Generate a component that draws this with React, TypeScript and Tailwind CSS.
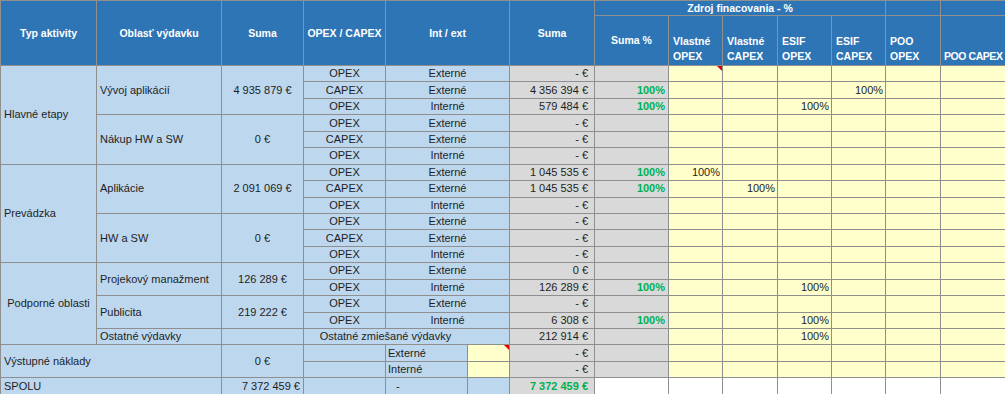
import React from "react";

const bd = "border border-[#8f8f8f]";
const hd = `${bd} bg-[#2e75b6] text-white font-bold text-[10.5px]`;
const blue = `${bd} bg-[#bdd7ee]`;
const grey = `${bd} bg-[#d9d9d9]`;
const yellow = `${bd} bg-[#ffffcc]`;
const white = `${bd} bg-white`;

function Tri() {
  return (
    <span className="absolute right-0 top-0 w-0 h-0 border-t-[5px] border-l-[5px] border-t-[#e00000] border-l-transparent" />
  );
}

function Tail({ s, pct, at, tri }: { s: string; pct?: boolean; at?: number; tri?: boolean }) {
  return (
    <>
      <td className={`${grey} text-right pr-[6px]`}>{s}</td>
      <td className={`${grey} text-right pr-[3px] font-bold text-[#00b050]`}>{pct ? "100%" : ""}</td>
      {[0, 1, 2, 3, 4, 5].map((i) => (
        <td key={i} className={`${yellow} text-right pr-[2px] ${i === 0 && tri ? "relative" : ""}`}>
          {at === i ? "100%" : ""}
          {i === 0 && tri ? <Tri /> : null}
        </td>
      ))}
    </>
  );
}

function OC({ t }: { t: string }) {
  return <td className={`${blue} text-center`}>{t}</td>;
}
function IE({ t }: { t: string }) {
  return (
    <td colSpan={2} className={`${blue} text-center`}>
      {t}
    </td>
  );
}

const rowH = "h-[16.45px]";

export default function App() {
  return (
    <div className="w-[1005px] h-[394px] overflow-hidden bg-white font-['Liberation_Sans',Arial,sans-serif] text-[11px] text-[#1e1e1e] leading-[13px]">
      <table className="table-fixed border-collapse w-[1020px]">
        <colgroup>
          <col className="w-[96px]" />
          <col className="w-[125px]" />
          <col className="w-[82px]" />
          <col className="w-[82px]" />
          <col className="w-[82px]" />
          <col className="w-[42px]" />
          <col className="w-[85px]" />
          <col className="w-[74px]" />
          <col className="w-[54px]" />
          <col className="w-[55px]" />
          <col className="w-[54px]" />
          <col className="w-[54px]" />
          <col className="w-[55px]" />
          <col className="w-[80px]" />
        </colgroup>
        <tbody>
          <tr className="h-[15px]">
            <td rowSpan={2} className={`${hd} text-center`}>Typ aktivity</td>
            <td rowSpan={2} className={`${hd} text-center`}>Oblasť výdavku</td>
            <td rowSpan={2} className={`${hd} text-center`}>Suma</td>
            <td rowSpan={2} className={`${hd} text-center`}>OPEX / CAPEX</td>
            <td rowSpan={2} colSpan={2} className={`${hd} text-center`}>Int / ext</td>
            <td rowSpan={2} className={`${hd} text-center`}>Suma</td>
            <td colSpan={5} className={`${hd} text-center leading-[14px]`}>Zdroj finacovania - %</td>
            <td className={hd}></td>
            <td className={hd}></td>
          </tr>
          <tr className="h-[50px]">
            <td className={`${hd} text-center`}>Suma %</td>
            <td className={`${hd} align-bottom leading-[15px] pl-[4px] pb-[1px]`}>Vlastné<br />OPEX</td>
            <td className={`${hd} align-bottom leading-[15px] pl-[4px] pb-[1px]`}>Vlastné<br />CAPEX</td>
            <td className={`${hd} align-bottom leading-[15px] pl-[4px] pb-[1px]`}>ESIF<br />OPEX</td>
            <td className={`${hd} align-bottom leading-[15px] pl-[4px] pb-[1px]`}>ESIF<br />CAPEX</td>
            <td className={`${hd} align-bottom leading-[15px] pl-[4px] pb-[1px]`}>POO<br />OPEX</td>
            <td className={`${hd} align-bottom leading-[15px] pl-[3px] pb-[1px] whitespace-nowrap tracking-[-0.45px]`}>POO CAPEX</td>
          </tr>

          {/* Hlavné etapy */}
          <tr className={rowH}>
            <td rowSpan={6} className={`${blue} pl-[3px]`}>Hlavné etapy</td>
            <td rowSpan={3} className={`${blue} pl-[3px]`}>Vývoj aplikácií</td>
            <td rowSpan={3} className={`${blue} text-center`}>4 935 879 €</td>
            <OC t="OPEX" />
            <IE t="Externé" />
            <Tail s="- €" tri />
          </tr>
          <tr className={rowH}>
            <OC t="CAPEX" />
            <IE t="Externé" />
            <Tail s="4 356 394 €" pct at={3} />
          </tr>
          <tr className={rowH}>
            <OC t="OPEX" />
            <IE t="Interné" />
            <Tail s="579 484 €" pct at={2} />
          </tr>
          <tr className={rowH}>
            <td rowSpan={3} className={`${blue} pl-[3px]`}>Nákup HW a SW</td>
            <td rowSpan={3} className={`${blue} text-center`}>0 €</td>
            <OC t="OPEX" />
            <IE t="Externé" />
            <Tail s="- €" />
          </tr>
          <tr className={rowH}>
            <OC t="CAPEX" />
            <IE t="Externé" />
            <Tail s="- €" />
          </tr>
          <tr className={rowH}>
            <OC t="OPEX" />
            <IE t="Interné" />
            <Tail s="- €" />
          </tr>

          {/* Prevádzka */}
          <tr className={rowH}>
            <td rowSpan={6} className={`${blue} pl-[3px]`}>Prevádzka</td>
            <td rowSpan={3} className={`${blue} pl-[3px]`}>Aplikácie</td>
            <td rowSpan={3} className={`${blue} text-center`}>2 091 069 €</td>
            <OC t="OPEX" />
            <IE t="Externé" />
            <Tail s="1 045 535 €" pct at={0} />
          </tr>
          <tr className={rowH}>
            <OC t="CAPEX" />
            <IE t="Externé" />
            <Tail s="1 045 535 €" pct at={1} />
          </tr>
          <tr className={rowH}>
            <OC t="OPEX" />
            <IE t="Interné" />
            <Tail s="- €" />
          </tr>
          <tr className={rowH}>
            <td rowSpan={3} className={`${blue} pl-[3px]`}>HW a SW</td>
            <td rowSpan={3} className={`${blue} text-center`}>0 €</td>
            <OC t="OPEX" />
            <IE t="Externé" />
            <Tail s="- €" />
          </tr>
          <tr className={rowH}>
            <OC t="CAPEX" />
            <IE t="Externé" />
            <Tail s="- €" />
          </tr>
          <tr className={rowH}>
            <OC t="OPEX" />
            <IE t="Interné" />
            <Tail s="- €" />
          </tr>

          {/* Podporné oblasti */}
          <tr className={rowH}>
            <td rowSpan={5} className={`${blue} text-center`}>Podporné oblasti</td>
            <td rowSpan={2} className={`${blue} pl-[3px]`}>Projekový manažment</td>
            <td rowSpan={2} className={`${blue} text-center`}>126 289 €</td>
            <OC t="OPEX" />
            <IE t="Externé" />
            <Tail s="0 €" />
          </tr>
          <tr className={rowH}>
            <OC t="OPEX" />
            <IE t="Interné" />
            <Tail s="126 289 €" pct at={2} />
          </tr>
          <tr className={rowH}>
            <td rowSpan={2} className={`${blue} pl-[3px]`}>Publicita</td>
            <td rowSpan={2} className={`${blue} text-center`}>219 222 €</td>
            <OC t="OPEX" />
            <IE t="Externé" />
            <Tail s="- €" />
          </tr>
          <tr className={rowH}>
            <OC t="OPEX" />
            <IE t="Interné" />
            <Tail s="6 308 €" pct at={2} />
          </tr>
          <tr className={rowH}>
            <td className={`${blue} pl-[3px]`}>Ostatné výdavky</td>
            <td className={blue}></td>
            <td colSpan={2} className={`${blue} border-r-[#bdd7ee] text-center whitespace-nowrap`}>Ostatné zmiešané výdavky</td>
            <td className={blue}></td>
            <Tail s="212 914 €" at={2} />
          </tr>

          {/* Výstupné náklady */}
          <tr className={rowH}>
            <td rowSpan={2} colSpan={2} className={`${blue} pl-[3px]`}>Výstupné náklady</td>
            <td rowSpan={2} className={`${blue} text-center`}>0 €</td>
            <td className={blue}></td>
            <td className={`${blue} pl-[2px]`}>Externé</td>
            <td className={`${yellow} relative`}>
              <Tri />
            </td>
            <Tail s="- €" />
          </tr>
          <tr className={rowH}>
            <td className={blue}></td>
            <td className={`${blue} pl-[2px]`}>Interné</td>
            <td className={yellow}></td>
            <Tail s="- €" />
          </tr>

          {/* SPOLU */}
          <tr className={rowH}>
            <td colSpan={2} className={`${blue} pl-[3px]`}>SPOLU</td>
            <td className={`${blue} text-right pr-[3px]`}>7 372 459 €</td>
            <td className={blue}></td>
            <td className={`${blue} pl-[10px]`}>-</td>
            <td className={blue}></td>
            <td className={`${grey} text-right pr-[6px] font-bold text-[#00b050]`}>7 372 459 €</td>
            <td className={white}></td>
            <td className={white}></td>
            <td className={white}></td>
            <td className={white}></td>
            <td className={white}></td>
            <td className={white}></td>
            <td className={white}></td>
          </tr>
        </tbody>
      </table>
    </div>
  );
}
